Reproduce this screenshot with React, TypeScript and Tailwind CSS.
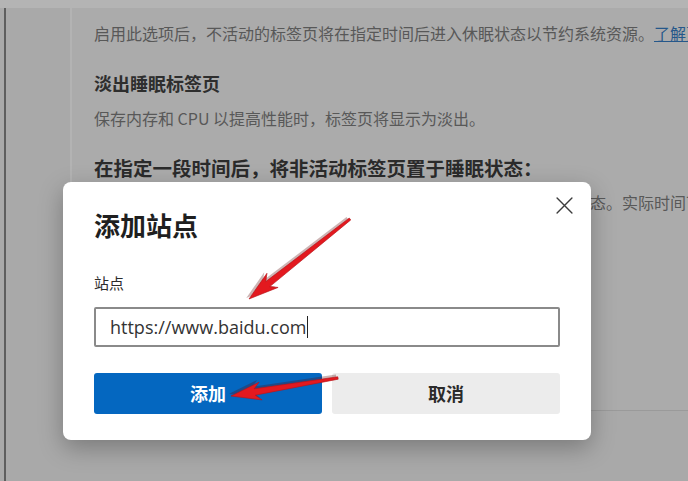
import React from "react";

const cjk = { fontFamily: '"Noto Sans CJK SC", "Noto Sans", sans-serif' };

function Arrow({ x1, y1, x2, y2 }: { x1: number; y1: number; x2: number; y2: number }) {
  const dx = x2 - x1;
  const dy = y2 - y1;
  const L = Math.sqrt(dx * dx + dy * dy);
  const a = (Math.atan2(dy, dx) * 180) / Math.PI;
  const pts = `0,-1.2 ${L - 24},-3.2 ${L - 30},-9 ${L},0 ${L - 30},9 ${L - 24},3.2 0,1.2`;
  return (
    <g transform={`translate(${x1},${y1}) rotate(${a})`}>
      <polygon points={pts} fill="#5a0a0a" opacity="0.3" transform="translate(1.5,2.5)" />
      <polygon points={pts} fill="#e3191f" stroke="#b5141a" strokeWidth="0.6" />
    </g>
  );
}

export default function App() {
  return (
    <div className="relative w-[688px] h-[481px] overflow-hidden bg-[#a9a9a9]" style={cjk}>
      {/* background page */}
      <div className="flex flex-col h-full">
        <div className="h-[8px] shrink-0 bg-[#b4b4b4]" />
        <div className="flex flex-1 min-w-0">
          <div className="w-[4px] shrink-0" />
          <div className="w-[2px] shrink-0 bg-[#5e5e5e]" />
          <div className="w-[64px] shrink-0" />
          <div className="flex-1 min-w-0 flex flex-col">
            <div className="h-[403px] bg-[#ababab] border-l-2 border-b border-l-[#b3b3b3] border-b-[#9a9a9a] pl-[22px] pt-[14px] overflow-hidden whitespace-nowrap">
              <div className="text-[16px] leading-[22px] text-[#585858]">
                启用此选项后，不活动的标签页将在指定时间后进入休眠状态以节约系统资源。
                <span className="text-[#25578a] underline">了解更多</span>
              </div>
              <div className="mt-[27px] text-[18px] leading-[24px] font-bold text-[#2e2e2e]">淡出睡眠标签页</div>
              <div className="mt-[12px] text-[16px] leading-[22px] text-[#585858]">
                保存内存和 CPU 以提高性能时，标签页将显示为淡出。
              </div>
              <div className="mt-[26px] text-[19.5px] leading-[26px] font-bold text-[#2b2b2b]">
                在指定一段时间后，将非活动标签页置于睡眠状态：
              </div>
              <div className="mt-[10px] text-[16px] leading-[22px] text-[#585858]">
                根据系统资源使用情况，非活动标签页可能在指定时间之前进入睡眠状态。实际时间可能有所不同。
              </div>
            </div>
          </div>
        </div>
      </div>

      {/* dialog */}
      <div className="absolute left-[63px] top-[182px] w-[528px] h-[258px] bg-white rounded-[8px] shadow-[0_8px_24px_rgba(0,0,0,0.28)] px-[31px] pt-[26px]">
        <button className="absolute right-[18px] top-[15px] w-[17px] h-[17px] text-[#3c3c3c]">
          <svg viewBox="0 0 16 16" width="17" height="17" fill="none" stroke="currentColor" strokeWidth="1.3" strokeLinecap="round">
            <path d="M1 1 L15 15 M15 1 L1 15" />
          </svg>
        </button>
        <div className="text-[26px] leading-[34px] font-bold text-[#1f1f1f]">添加站点</div>
        <div className="mt-[31px] text-[15px] leading-[20px] text-[#2b2b2b]">站点</div>
        <div className="mt-[14px] h-[40px] border-2 border-[#8a8a8a] rounded-[2px] flex items-center pl-[14px]">
          <span className="text-[18px] text-[#333333]" style={{ fontFamily: '"Open Sans", "Noto Sans", sans-serif' }}>
            https://www.baidu.com
          </span>
          <span className="w-[1px] h-[22px] bg-[#222] ml-[1px]" />
        </div>
        <div className="mt-[26px] flex gap-[10px]">
          <button className="flex-1 h-[41px] bg-[#0467c0] rounded-[3px] text-white text-[18px] font-bold">添加</button>
          <button className="flex-1 h-[41px] bg-[#ececec] rounded-[3px] text-[#2b2b2b] text-[18px] font-bold">取消</button>
        </div>
      </div>

      {/* annotation arrows */}
      <svg className="absolute inset-0 pointer-events-none" width="688" height="481">
        <Arrow x1={350} y1={219} x2={249} y2={299} />
        <Arrow x1={338} y1={378} x2={231} y2={396} />
      </svg>
    </div>
  );
}
